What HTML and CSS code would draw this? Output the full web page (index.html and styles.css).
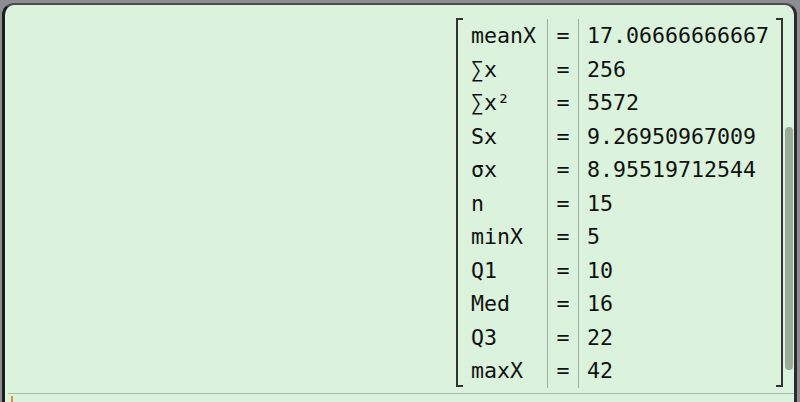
FILE: index.html
```html
<!DOCTYPE html>
<html>
<head>
<meta charset="utf-8">
<link rel="stylesheet" href="styles.css">
</head>
<body>
<div class="panel">
  <div class="output">
    <div class="matrix">
      <div class="bracket left"></div>
      <div class="grid">
        <div class="c1">meanX</div><div class="c2">=</div><div class="c3">17.06666666667</div>
        <div class="c1">∑x</div><div class="c2">=</div><div class="c3">256</div>
        <div class="c1">∑x²</div><div class="c2">=</div><div class="c3">5572</div>
        <div class="c1">Sx</div><div class="c2">=</div><div class="c3">9.26950967009</div>
        <div class="c1">σx</div><div class="c2">=</div><div class="c3">8.95519712544</div>
        <div class="c1">n</div><div class="c2">=</div><div class="c3">15</div>
        <div class="c1">minX</div><div class="c2">=</div><div class="c3">5</div>
        <div class="c1">Q1</div><div class="c2">=</div><div class="c3">10</div>
        <div class="c1">Med</div><div class="c2">=</div><div class="c3">16</div>
        <div class="c1">Q3</div><div class="c2">=</div><div class="c3">22</div>
        <div class="c1">maxX</div><div class="c2">=</div><div class="c3">42</div>
      </div>
      <div class="bracket right"></div>
    </div>
    <div class="scrollbar"><div class="thumb"></div></div>
  </div>
  <div class="input"><span class="cursor"></span></div>
</div>
</body>
</html>
```
FILE: styles.css
```css
html, body {
  margin: 0;
  padding: 0;
  height: 100%;
  overflow: hidden;
}
body {
  background: #8d8d92;
  padding: 3px 3px 0 2px;
  box-sizing: border-box;
}
.panel {
  height: 100%;
  background: #dbf2dc;
  border-left: 3px solid #1c1c1e;
  border-top: 2px solid #4a4a4e;
  border-right: 3px solid #2a2a2c;
  border-radius: 12px 12px 0 0;
  box-sizing: border-box;
  overflow: hidden;
}
.output {
  display: flex;
  justify-content: flex-end;
  height: 389px;
  border-bottom: 1px solid #a6b8a6;
  margin-left: 3px;
  padding-top: 13px;
  box-sizing: border-box;
}
.matrix {
  display: flex;
  align-items: stretch;
  height: 369px;
  font-family: "DejaVu Sans Mono", monospace;
  font-size: 21.6px;
  color: #111;
}
.bracket {
  width: 5px;
  border-top: 2px solid #333;
  border-bottom: 2px solid #333;
}
.bracket.left {
  border-left: 2px solid #333;
}
.bracket.right {
  border-right: 2px solid #333;
}
.grid {
  display: grid;
  grid-template-columns: 84px 31px 198px;
  grid-auto-rows: 33.5px;
  padding-top: 1px;
}
.grid > div {
  display: flex;
  align-items: center;
  white-space: pre;
}
.c1 {
  padding-left: 8px;
}
.c2 {
  justify-content: center;
  border-left: 1px solid #9fb09f;
}
.c3 {
  padding-left: 8px;
  border-left: 1px solid #9fb09f;
}
.scrollbar {
  width: 8px;
  margin-left: 2px;
  margin-right: 1px;
  padding-top: 109px;
}
.thumb {
  height: 243px;
  background: #9aaa9b;
  border-radius: 4px;
}
.input {
  height: 8px;
  padding-left: 6px;
  padding-top: 2px;
}
.cursor {
  display: block;
  width: 2px;
  height: 6px;
  background: #e08a3c;
}
```
